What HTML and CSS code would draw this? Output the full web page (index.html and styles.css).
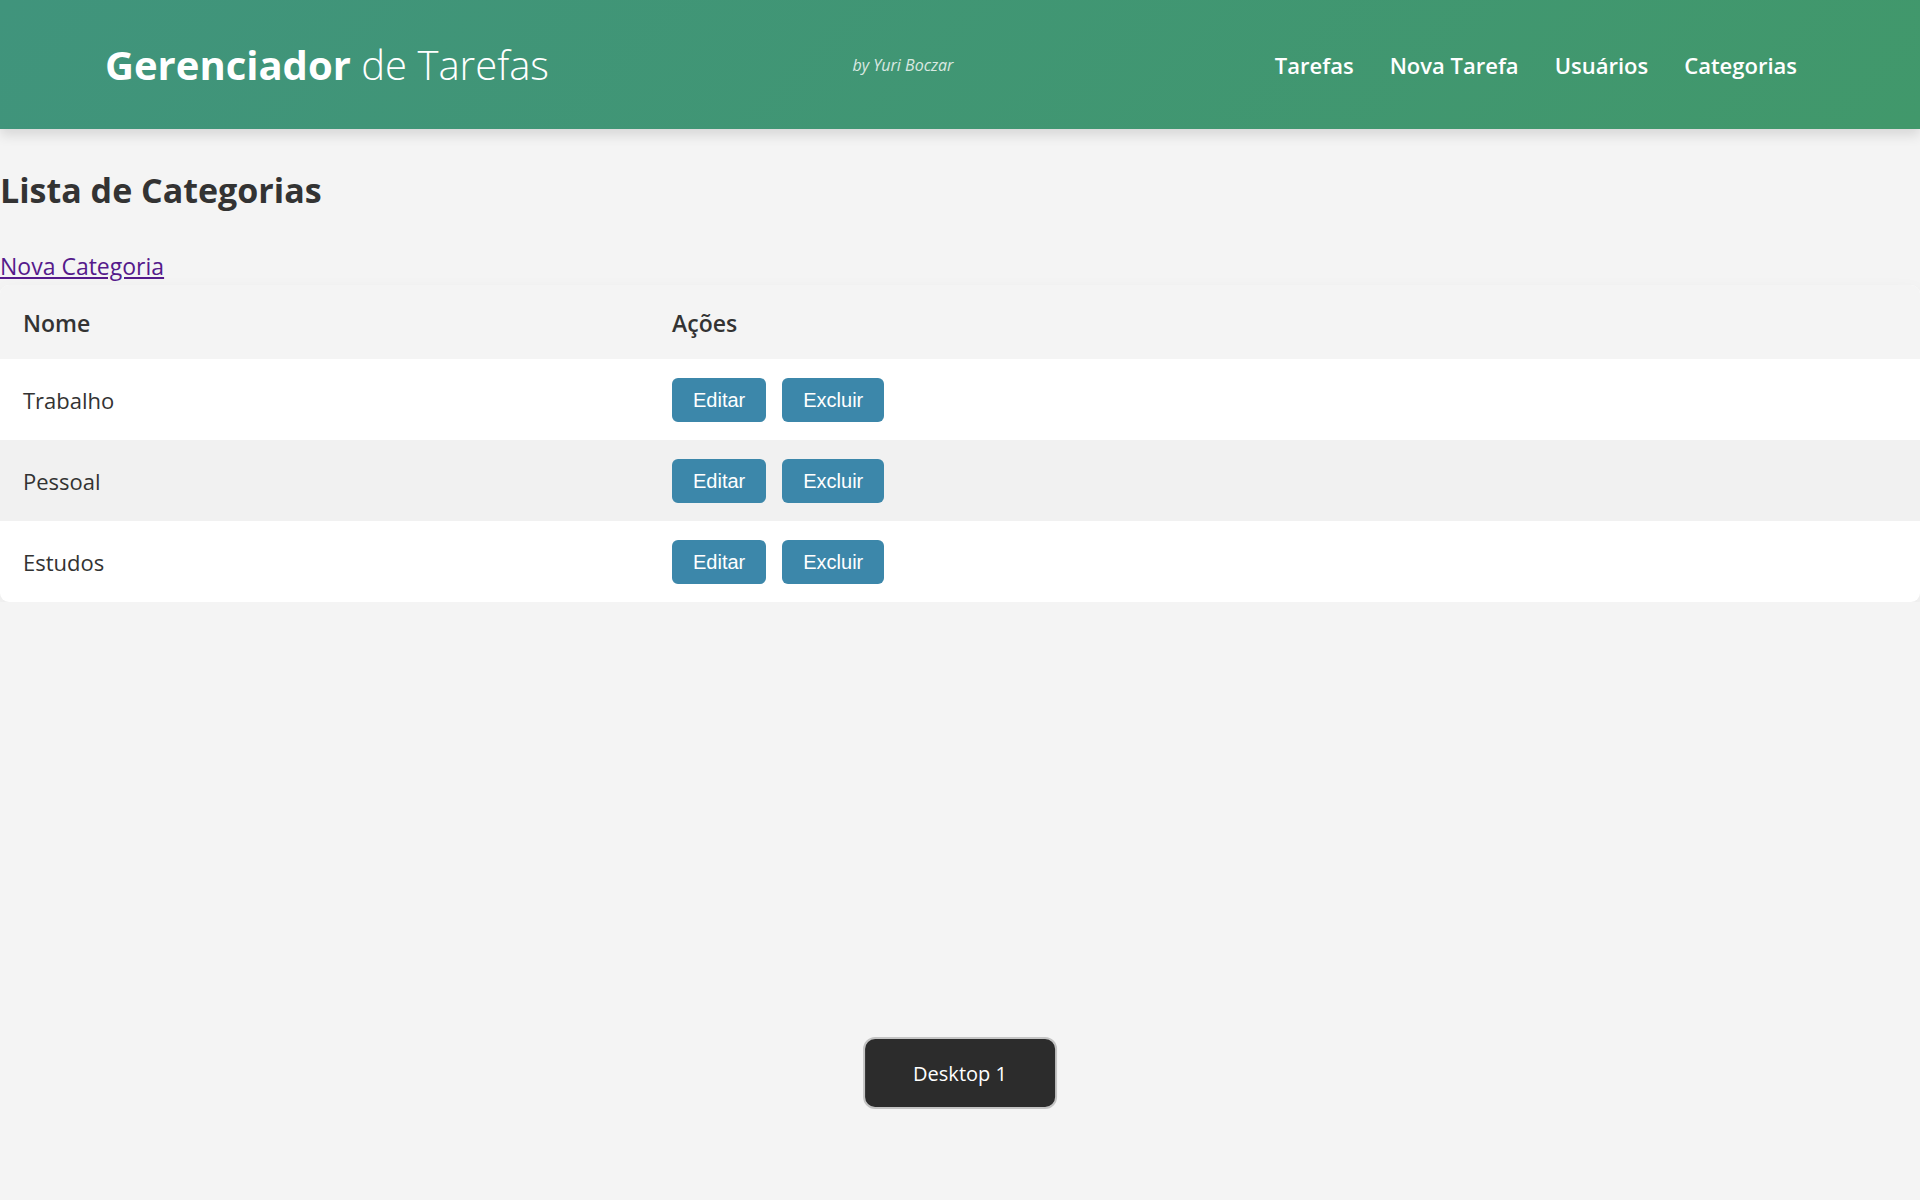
FILE: index.html
```html
<!DOCTYPE html>
<html lang="pt-BR">
<head>
<meta charset="utf-8">
<meta name="viewport" content="width=device-width, initial-scale=1">
<title>Gerenciador de Tarefas</title>
<link rel="stylesheet" href="styles.css">
</head>
<body>
<header class="header">
  <h1 class="brand">Gerenciador <span class="brand-light">de Tarefas</span></h1>
  <p class="byline">by Yuri Boczar</p>
  <nav class="nav">
    <a class="nav-link" href="#tarefas">Tarefas</a>
    <a class="nav-link" href="#nova-tarefa">Nova Tarefa</a>
    <a class="nav-link" href="#usuarios">Usuários</a>
    <a class="nav-link" href="#categorias">Categorias</a>
  </nav>
</header>
<main>
  <h2 class="title">Lista de Categorias</h2>
  <a class="new-link" href="#nova-categoria">Nova Categoria</a>
  <table class="table">
    <thead>
      <tr><th class="col-name" scope="col">Nome</th><th scope="col">Ações</th></tr>
    </thead>
    <tbody>
      <tr><td>Trabalho</td><td><div class="actions"><button class="btn" type="button">Editar</button><button class="btn" type="button">Excluir</button></div></td></tr>
      <tr><td>Pessoal</td><td><div class="actions"><button class="btn" type="button">Editar</button><button class="btn" type="button">Excluir</button></div></td></tr>
      <tr><td>Estudos</td><td><div class="actions"><button class="btn" type="button">Editar</button><button class="btn" type="button">Excluir</button></div></td></tr>
    </tbody>
  </table>
</main>
<div class="toast" role="status">Desktop 1</div>
</body>
</html>
```
FILE: styles.css
```css
* {
  box-sizing: border-box;
}

body {
  margin: 0;
  background: #f4f4f4;
  color: #333;
  font-family: "Segoe UI", "Open Sans", "Noto Sans", sans-serif;
  font-size: 22px;
  line-height: 32px;
}

.header {
  display: flex;
  align-items: center;
  justify-content: space-between;
  padding: 36px 105px;
  background: linear-gradient(135deg, #40947c, #41986b);
  box-shadow: 0 6px 12px rgba(0, 0, 0, 0.12);
  color: #fff;
}

.brand {
  margin: 0;
  font-size: 40px;
  line-height: 57px;
  font-weight: 700;
}

.brand-light {
  font-weight: 300;
}

.byline {
  margin: 0;
  font-size: 16px;
  font-style: italic;
  opacity: 0.8;
}

.nav {
  display: flex;
}

.nav-link {
  padding: 0 18px;
  color: #fff;
  font-weight: 600;
  text-decoration: none;
}

.title {
  margin: 37px 0 36px;
  font-size: 34px;
  line-height: 48px;
}

.new-link {
  display: block;
  width: fit-content;
  margin-bottom: 3px;
  color: #551a8b;
  font-size: 23px;
}

.table {
  width: 100%;
  border-collapse: collapse;
  border-radius: 9px;
  overflow: hidden;
  background: #fff;
  box-shadow: 0 6px 18px rgba(0, 0, 0, 0.05);
}

.table th,
.table td {
  padding: 19px 23px 18px;
  text-align: left;
}

.table th {
  padding: 22px 23px 20px;
  background: #f4f4f4;
  font-size: 23px;
  font-weight: 600;
}

.col-name {
  width: 649px;
}

.table tbody tr:nth-child(even) {
  background: #f1f1f1;
}

.actions {
  display: flex;
  gap: 16px;
}

.btn {
  height: 44px;
  padding: 0 21px;
  border: 0;
  border-radius: 6px;
  background: #3c87aa;
  color: #fff;
  font-family: "Liberation Sans", Arial, sans-serif;
  font-size: 20px;
}

.toast {
  position: fixed;
  bottom: 91px;
  left: 50%;
  transform: translateX(-50%);
  padding: 19px 48px 17px;
  border: 2px solid #c4c4c4;
  border-radius: 12px;
  background: #2c2c2c;
  color: #fff;
  font-size: 20px;
  white-space: nowrap;
}
```
